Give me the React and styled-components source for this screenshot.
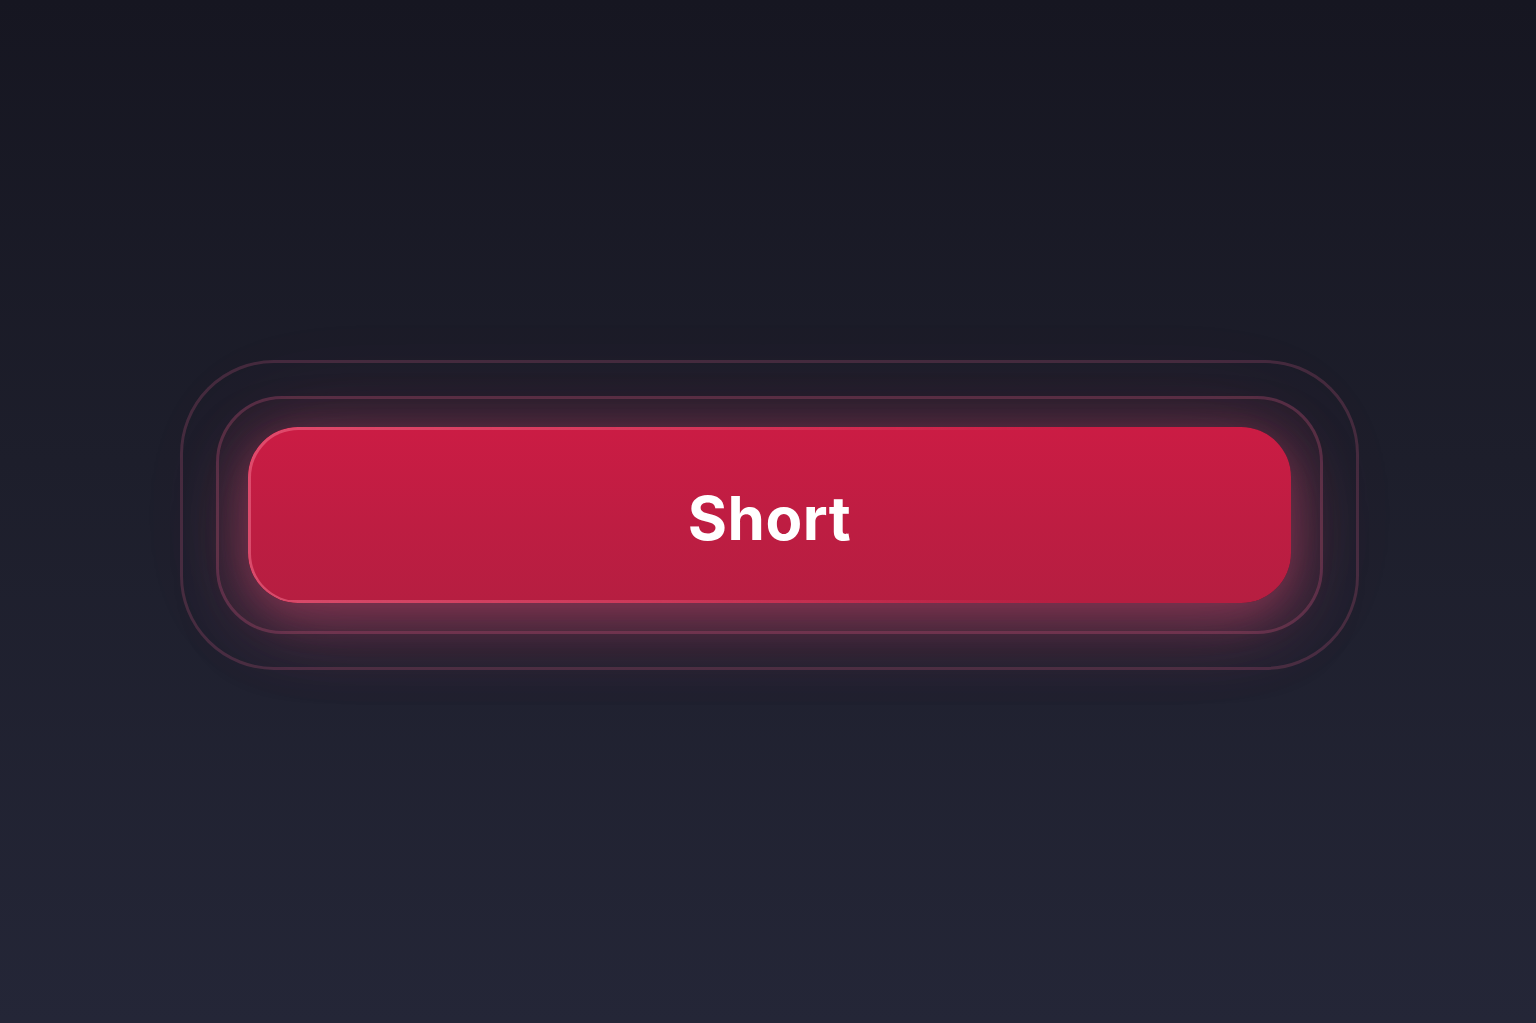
import React from 'react';
import styled, { createGlobalStyle } from 'styled-components';

const GlobalStyle = createGlobalStyle`
  html, body {
    margin: 0;
    padding: 0;
    height: 100%;
  }
  body {
    background: linear-gradient(180deg, #161621 0%, #1d1e2b 45%, #242637 100%);
    font-family: Inter, "Noto Sans", "Liberation Sans", sans-serif;
  }
  #root {
    height: 100%;
  }
`;

const Stage = styled.main`
  box-sizing: border-box;
  height: 100vh;
  display: flex;
  align-items: center;
  justify-content: center;
  padding: 6px 0 0 3px;
`;

const Ring = styled.div`
  display: flex;
  border: 3px solid ${({ tone }) => tone};
  border-radius: ${({ radius }) => radius}px;
  padding: ${({ padY, padX }) => `${padY}px ${padX}px`};
  background: ${({ haze }) => haze || 'transparent'};
`;

const Button = styled.button`
  position: relative;
  box-sizing: border-box;
  width: 1043px;
  height: 176px;
  border: none;
  border-radius: 50px;
  background: linear-gradient(180deg, #cb1c44 0%, #be1d42 55%, #b61e41 100%);
  color: #fff;
  font-family: Inter, "Noto Sans", "Liberation Sans", sans-serif;
  font-size: 60px;
  font-weight: 700;
  letter-spacing: 0.5px;
  cursor: pointer;
  box-shadow:
    0 24px 70px rgba(215, 70, 110, 0.34),
    0 8px 40px rgba(215, 70, 110, 0.3),
    0 0 110px rgba(200, 60, 100, 0.16);

  &::before {
    content: '';
    position: absolute;
    inset: 0;
    border-radius: inherit;
    padding: 2.5px;
    background: linear-gradient(90deg, rgba(235, 100, 130, 0.65) 0%, rgba(235, 95, 125, 0.4) 40%, rgba(235, 95, 125, 0) 80%);
    -webkit-mask: linear-gradient(#000 0 0) content-box, linear-gradient(#000 0 0);
    -webkit-mask-composite: xor;
    mask-composite: exclude;
    pointer-events: none;
  }
`;

const Label = styled.span`
  position: relative;
  top: 3px;
`;

export default function App() {
  return (
    <>
      <GlobalStyle />
      <Stage>
        <Ring tone="rgba(215, 95, 135, 0.22)" radius={94} padY={33} padX={33}>
          <Ring
            tone="rgba(215, 95, 135, 0.26)"
            haze="rgba(200, 70, 110, 0.05)"
            radius={66}
            padY={28}
            padX={29}
          >
            <Button>
              <Label>Short</Label>
            </Button>
          </Ring>
        </Ring>
      </Stage>
    </>
  );
}
